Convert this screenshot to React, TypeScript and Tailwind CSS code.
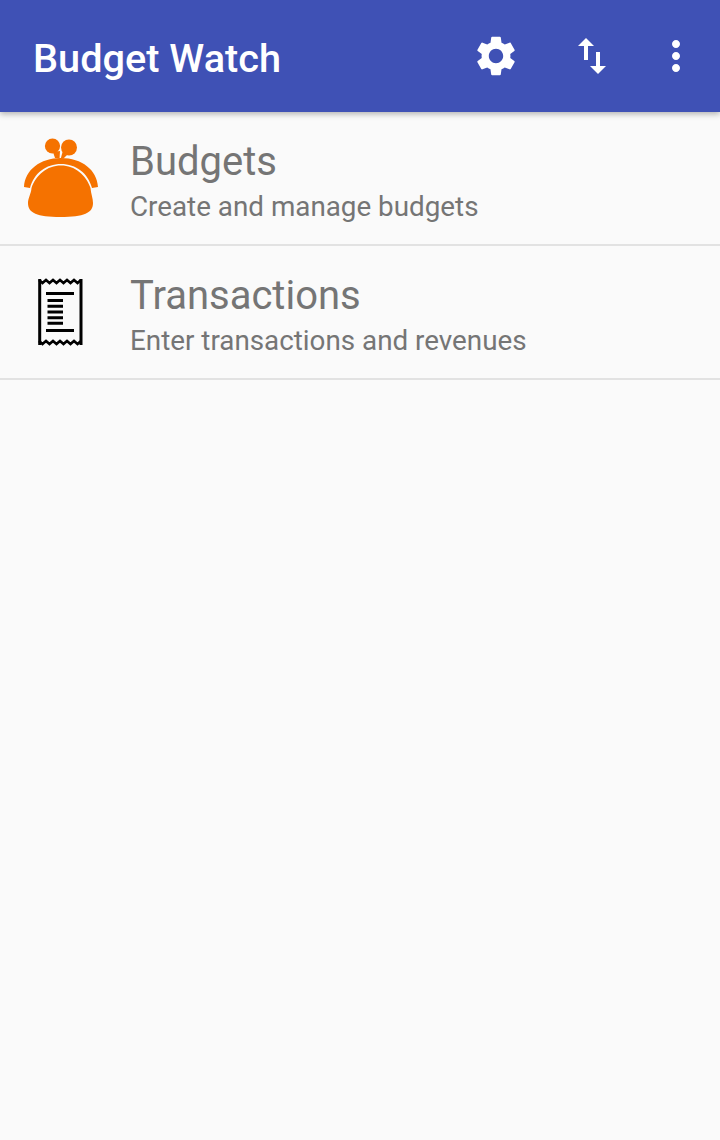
const F = "font-['Roboto',sans-serif]";

function Purse() {
  return (
    <svg viewBox="0 2 130 133" className="w-[130px] h-[133px] shrink-0">
      <g fill="#f57200">
        <circle cx="52.5" cy="36" r="7.6" />
        <circle cx="69" cy="37.5" r="8" />
        <path d="M53 42 L60 41 L59.5 48.5 L55 48 Z" />
        <path d="M62.5 42 L67 45 L63.5 48.5 L60.8 48.5 Z" />
        <path d="M24 77 C25 60 40 48 61 48 C82 48 97 60 98 77 L92 78 C88 63 76 54 61 54 C46 54 34 63 30 78 Z" />
        <path d="M31.5 78 C36 65 47 55.5 61 55.5 C75 55.5 86 65 90.5 78 C91 84 93 88 93 93 C93 103 84 107 60.5 107 C37 107 28 103 28 93 C28 88 31 84 31.5 78 Z" />
      </g>
    </svg>
  );
}

function Receipt() {
  const wave = (y: number) => {
    let d = `M39 ${y}`;
    for (let i = 0; i < 6; i++) {
      const x = 39 + i * 7;
      d += ` L${x + 3.5} ${y + 3} L${x + 7} ${y}`;
    }
    return d;
  };
  return (
    <svg viewBox="0 -4 130 133" className="w-[130px] h-[133px] shrink-0">
      <g stroke="#000" fill="none">
        <path d={wave(30)} strokeWidth="2.6" />
        <path d={wave(91)} strokeWidth="2.6" />
        <path d="M39.7 29 V95 M81 29 V95" strokeWidth="3" />
        <path d="M46 43.5 H74 M46 80.5 H74" strokeWidth="3" />
        <path d="M47.5 50.5 H63 M47.5 56.2 H63 M47.5 62 H63 M47.5 67.7 H63 M47.5 73.3 H63" strokeWidth="3" />
      </g>
    </svg>
  );
}

function Row({ icon, title, sub }: { icon: React.ReactNode; title: string; sub: string }) {
  return (
    <div className="flex items-start h-[134px] border-b-2 border-[#e2e2e2]">
      {icon}
      <div className="flex flex-col pt-[26px]">
        <div className="text-[40px] leading-[48px] text-[#757575]">{title}</div>
        <div className="text-[27.8px] leading-[38px] text-[#757575] mt-[2px]">{sub}</div>
      </div>
    </div>
  );
}

export default function App() {
  return (
    <div className={`${F} w-[720px] h-[1140px] bg-[#fafafa] flex flex-col overflow-hidden`}>
      <header className="relative h-[112px] shrink-0 bg-[#3f51b5] flex items-center pl-[33px] pr-[20px] shadow-[0_2px_6px_rgba(0,0,0,0.3)]">
        <h1 className="flex-1 text-[39.7px] font-medium text-white pt-[6px]">Budget Watch</h1>
        <svg viewBox="0 0 24 24" className="w-[48px] h-[48px] fill-white">
          <path d="M19.14,12.94c0.04-0.3,0.06-0.61,0.06-0.94c0-0.32-0.02-0.64-0.07-0.94l2.03-1.58c0.18-0.14,0.23-0.41,0.12-0.61 l-1.92-3.32c-0.12-0.22-0.37-0.29-0.59-0.22l-2.39,0.96c-0.5-0.38-1.03-0.7-1.62-0.94L14.4,2.81c-0.04-0.24-0.24-0.41-0.48-0.41 h-3.84c-0.24,0-0.43,0.17-0.47,0.41L9.25,5.35C8.66,5.59,8.12,5.92,7.63,6.29L5.24,5.33c-0.22-0.08-0.47,0-0.59,0.22L2.74,8.87 C2.62,9.08,2.66,9.34,2.86,9.48l2.03,1.58C4.84,11.36,4.8,11.69,4.8,12s0.02,0.64,0.07,0.94l-2.03,1.58 c-0.18,0.14-0.23,0.41-0.12,0.61l1.92,3.32c0.12,0.22,0.37,0.29,0.59,0.22l2.39-0.96c0.5,0.38,1.03,0.7,1.62,0.94l0.36,2.54 c0.05,0.24,0.24,0.41,0.48,0.41h3.84c0.24,0,0.44-0.17,0.47-0.41l0.36-2.54c0.59-0.24,1.13-0.56,1.62-0.94l2.39,0.96 c0.22,0.08,0.47,0,0.59-0.22l1.92-3.32c0.12-0.22,0.07-0.47-0.12-0.61L19.14,12.94z M12,15.6c-1.98,0-3.6-1.62-3.6-3.6 s1.62-3.6,3.6-3.6s3.6,1.62,3.6,3.6S13.98,15.6,12,15.6z" />
        </svg>
        <svg viewBox="0 0 24 24" className="w-[48px] h-[48px] fill-white ml-[48px]">
          <path d="M16 17.01V10h-2v7.01h-3L15 21l4-3.99h-3zM9 3L5 6.99h3V14h2V6.99h3L9 3z" />
        </svg>
        <svg viewBox="0 0 24 24" className="w-[48px] h-[48px] fill-white ml-[36px]">
          <path d="M12 8c1.1 0 2-.9 2-2s-.9-2-2-2-2 .9-2 2 .9 2 2 2zm0 2c-1.1 0-2 .9-2 2s.9 2 2 2 2-.9 2-2-.9-2-2-2zm0 6c-1.1 0-2 .9-2 2s.9 2 2 2 2-.9 2-2-.9-2-2-2z" />
        </svg>
      </header>
      <Row icon={<Purse />} title="Budgets" sub="Create and manage budgets" />
      <Row icon={<Receipt />} title="Transactions" sub="Enter transactions and revenues" />
    </div>
  );
}
